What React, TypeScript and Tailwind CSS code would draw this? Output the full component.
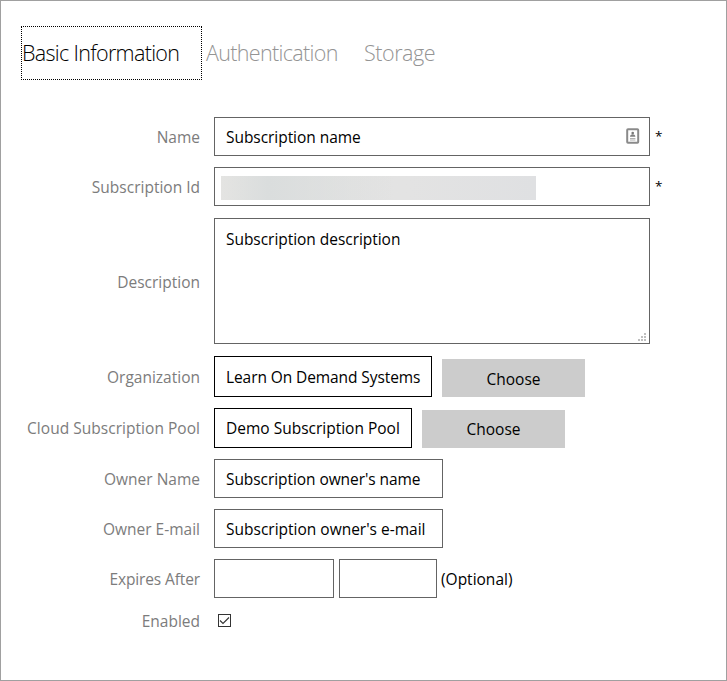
import type { ReactNode } from "react";

function Row({ label, className = "", children }: { label: string; className?: string; children: ReactNode }) {
  return (
    <div className={`flex items-center ${className}`}>
      <label className="mr-[14px] w-[199px] shrink-0 text-right whitespace-nowrap text-[#7c7c7c]">{label}</label>
      {children}
    </div>
  );
}

function Field({ className, children }: { className: string; children?: ReactNode }) {
  return (
    <div className={`flex shrink-0 items-center border bg-white pl-[11px] whitespace-nowrap ${className}`}>
      {children}
    </div>
  );
}

function Required() {
  return <span className="mb-[2px] ml-[5px] text-[13.5px]">*</span>;
}

function ContactIcon() {
  return (
    <svg className="mr-[9px] mb-[2px] ml-auto" width="14" height="16" viewBox="0 0 14 16" fill="none">
      <rect x="1.2" y="1.2" width="11" height="13.600" rx="0.8" stroke="#8a8a8a" strokeWidth="2" />
      <circle cx="6.700" cy="5" r="1.3" fill="#777" />
      <path d="M4 8.800c0-1.800 1-2.600 2.700-2.600s2.700.8 2.700 2.600z" fill="#808080" />
      <path d="M4 10.500h5.400M4 12h5.400" stroke="#b0b0b0" strokeWidth="1.1" />
    </svg>
  );
}

function ResizeGrip() {
  const dots = [[6, 0], [3, 3], [6, 3], [0, 6], [3, 6], [6, 6]];
  return (
    <svg className="mr-[3px] mb-[2px] ml-auto self-end" width="8" height="8" viewBox="0 0 8 8" shapeRendering="crispEdges">
      {dots.map(([x, y]) => <rect key={`${x}-${y}`} x={x} y={y} width="2" height="2" fill="#bfbfbf" />)}
    </svg>
  );
}

function ChooseButton({ className = "" }: { className?: string }) {
  return (
    <button className={`ml-[10px] flex h-[38px] w-[143px] shrink-0 items-center justify-center self-end bg-[#ccc] text-black ${className}`}>
      Choose
    </button>
  );
}

export default function App() {
  return (
    <div className="h-[681px] w-[727px] overflow-hidden border border-[#a0a0a0] bg-white font-['Open_Sans','Noto_Sans',sans-serif] text-[15.5px] leading-5 text-black">
      <nav className="mt-[25px] ml-5 flex h-[54px] items-stretch text-[21.5px] font-light tracking-[-0.6px] text-[#949494]">
        <div className="flex w-[181px] items-center border border-dotted border-black tracking-[-0.68px] text-black">Basic Information</div>
        <div className="ml-[4px] flex w-[158px] items-center tracking-[-0.66px]">Authentication</div>
        <div className="flex items-center tracking-[-0.45px]">Storage</div>
      </nav>

      <form className="mt-[37px]">
        <Row label="Name">
          <Field className="h-[39px] w-[436px] border-[#646464]">
            <span className="tracking-[-0.05px]">Subscription name</span>
            <ContactIcon />
          </Field>
          <Required />
        </Row>
        <Row label="Subscription Id" className="mt-[11px]">
          <Field className="h-[39px] w-[436px] border-[#646464]">
            <div className="mt-[3px] -ml-[5px] h-6 w-[315px] bg-linear-to-r from-[#e4e4e2] via-[#e3e3e3] via-60% to-[#dfe0e2]">
              <div className="h-full w-full bg-linear-to-r from-transparent via-[#dadddd] via-15% to-transparent to-55%" />
            </div>
          </Field>
          <Required />
        </Row>
        <Row label="Description" className="mt-3 [&>label]:pt-[2px]">
          <Field className="h-[126px] w-[436px] border-[#646464]">
            <span className="self-start pt-[10px] tracking-[-0.04px]">Subscription description</span>
            <ResizeGrip />
          </Field>
        </Row>
        <Row label="Organization" className="mt-3">
          <Field className="h-[41px] w-[218px] border-black tracking-[-0.09px]">Learn On Demand Systems</Field>
          <ChooseButton className="pt-px" />
        </Row>
        <Row label="Cloud Subscription Pool" className="mt-[11px] [&>label]:tracking-[0.03px]">
          <Field className="h-10 w-[198px] border-black">Demo Subscription Pool</Field>
          <ChooseButton />
        </Row>
        <Row label="Owner Name" className="mt-[11px]">
          <Field className="h-[39px] w-[229px] border-[#646464] tracking-[-0.07px]">Subscription owner's name</Field>
        </Row>
        <Row label="Owner E-mail" className="mt-[11px]">
          <Field className="h-[39px] w-[229px] border-[#646464]">Subscription owner's e-mail</Field>
        </Row>
        <Row label="Expires After" className="mt-[11px] [&>label]:tracking-[-0.12px]">
          <Field className="h-[39px] w-[120px] border-[#646464]" />
          <Field className="ml-[5px] h-[39px] w-[98px] border-[#646464]" />
          <span className="ml-1">(Optional)</span>
        </Row>
        <Row label="Enabled" className="mt-[13px]">
          <svg className="-mt-px ml-1" width="13" height="13" viewBox="0 0 13 13" fill="none">
            <rect x="0.5" y="0.5" width="12" height="12" stroke="#333" />
            <path d="M2 6.500l3 3 6-6" stroke="#333" strokeWidth="1.1" />
          </svg>
        </Row>
      </form>
    </div>
  );
}
